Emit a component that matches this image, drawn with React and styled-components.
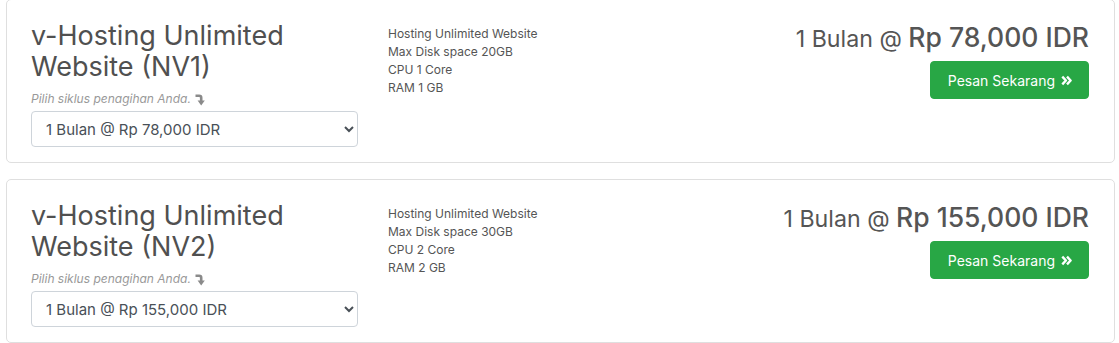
import React from 'react';
import styled, { createGlobalStyle } from 'styled-components';

const GlobalStyle = createGlobalStyle`
  body {
    margin: 0;
    background: #fff;
    font-family: Inter, "Noto Sans", sans-serif;
    color: #555;
  }
`;

const List = styled.div`
  display: flex;
  flex-direction: column;
  gap: 16px;
  margin-top: -1px;
  padding: 0 4px 0 6px;
`;

const Card = styled.div`
  display: grid;
  grid-template-columns: 327px 1fr auto;
  column-gap: 30px;
  border: 1px solid #dfdfdf;
  border-radius: 5px;
  padding: 20px 25px 15px 24px;
  background: #fff;
`;

const Title = styled.h3`
  margin: 0 0 8px;
  font-size: 27px;
  font-weight: 400;
  line-height: 31px;
  color: #505050;
`;

const Hint = styled.div`
  display: flex;
  align-items: center;
  gap: 4px;
  font-size: 12px;
  line-height: 18px;
  font-style: italic;
  color: #999;
`;

const BentArrow = styled.svg`
  width: 10px;
  height: 12px;
  margin-top: 2px;
  color: #8a8a8a;
`;

const Select = styled.select`
  margin-top: 3px;
  width: 100%;
  height: 36px;
  padding: 0 10px;
  font-family: Inter, "Noto Sans", sans-serif;
  font-size: 15px;
  color: #495057;
  background: #fff;
  border: 1px solid #ced4da;
  border-radius: 4px;
`;

const Features = styled.ul`
  list-style: none;
  margin: 0;
  padding: 5px 0 0;
  font-size: 12px;
  line-height: 18px;
  color: #555;
`;

const Order = styled.div`
  display: flex;
  flex-direction: column;
  align-items: flex-end;
`;

const Price = styled.div`
  font-size: 23.2px;
  line-height: 32px;
  margin-top: 1px;
  color: #555;
  white-space: nowrap;
  strong {
    font-size: 26.5px;
    font-weight: 500;
  }
`;

const Button = styled.button`
  display: inline-flex;
  align-items: center;
  gap: 6px;
  margin-top: 6px;
  height: 38px;
  padding: 0 16px 0 17px;
  font-family: Inter, "Noto Sans", sans-serif;
  font-size: 14px;
  color: #fff;
  background: #28a745;
  border: 1px solid #28a745;
  border-radius: 4px;
`;

const Chevrons = styled.svg`
  width: 11px;
  height: 11px;
  margin-top: 1px;
`;

const products = [
  {
    name: 'v-Hosting Unlimited Website (NV1)',
    price: 'Rp 78,000 IDR',
    features: ['Hosting Unlimited Website', 'Max Disk space 20GB', 'CPU 1 Core', 'RAM 1 GB'],
  },
  {
    name: 'v-Hosting Unlimited Website (NV2)',
    price: 'Rp 155,000 IDR',
    features: ['Hosting Unlimited Website', 'Max Disk space 30GB', 'CPU 2 Core', 'RAM 2 GB'],
  },
];

const Product = ({ name, price, features }) => (
  <Card>
    <div>
      <Title>{name}</Title>
      <Hint>
        Pilih siklus penagihan Anda.
        <BentArrow viewBox="0 0 10 12">
          <path d="M0.5 1.8 H4.2 Q6.2 1.8 6.2 3.8 V7" fill="none" stroke="currentColor" strokeWidth="2.6" />
          <path d="M2.6 6.6 H9.8 L6.2 11.6 Z" fill="currentColor" />
        </BentArrow>
      </Hint>
      <Select defaultValue="1">
        <option value="1">1 Bulan @ {price}</option>
      </Select>
    </div>
    <Features>
      {features.map((f) => (
        <li key={f}>{f}</li>
      ))}
    </Features>
    <Order>
      <Price>
        1 Bulan @ <strong>{price}</strong>
      </Price>
      <Button type="button">
        Pesan Sekarang
        <Chevrons viewBox="0 0 11 11">
          <path
            d="M1.3 1.6 L4.9 5.5 L1.3 9.4 M6 1.6 L9.6 5.5 L6 9.4"
            fill="none"
            stroke="currentColor"
            strokeWidth="2.4"
            strokeLinejoin="round"
          />
        </Chevrons>
      </Button>
    </Order>
  </Card>
);

export default function App() {
  return (
    <>
      <GlobalStyle />
      <List>
        {products.map((p) => (
          <Product key={p.name} {...p} />
        ))}
      </List>
    </>
  );
}
